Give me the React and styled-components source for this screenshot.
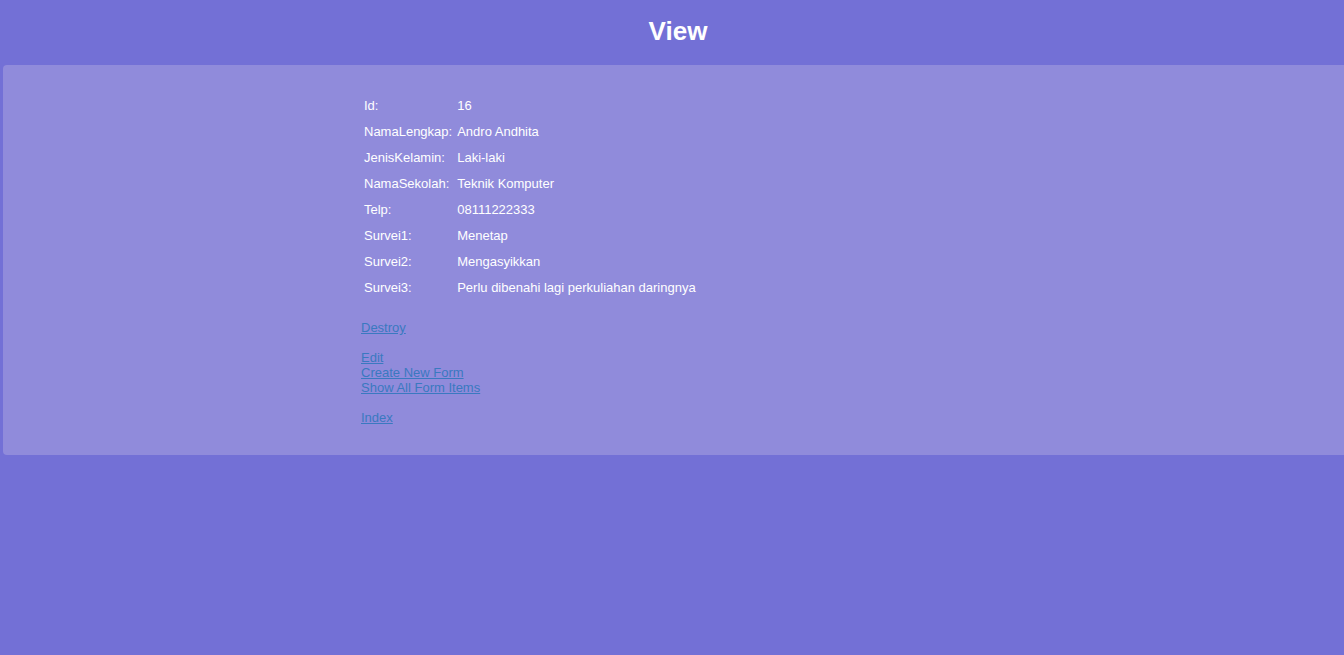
import React from "react";
import styled, { createGlobalStyle } from "styled-components";

const Global = createGlobalStyle`
  html, body { margin: 0; padding: 0; }
  body {
    background: #7370d6;
    font-family: "Liberation Sans", Arial, sans-serif;
    font-size: 13px;
    color: #ffffff;
    overflow: hidden;
  }
`;

const Header = styled.header`
  height: 65px;
  display: flex;
  align-items: center;
  justify-content: center;
  padding-left: 12px;
  box-sizing: border-box;
  padding-bottom: 2px;
`;

const Title = styled.h1`
  margin: 0;
  font-size: 26px;
  font-weight: bold;
  color: #ffffff;
`;

const Panel = styled.main`
  margin-left: 3px;
  width: 1360px;
  height: 390px;
  box-sizing: border-box;
  background: #908bdb;
  border-radius: 4px;
  padding: 28px 0 0 358px;
`;

const Table = styled.table`
  border-collapse: collapse;
  border-spacing: 0;
  margin-bottom: 19px;
`;

const Cell = styled.td`
  padding: 5px 2px 5px 3px;
  line-height: 16px;
  vertical-align: top;
  white-space: nowrap;
  color: #ffffff;
`;

const LinkGroup = styled.div`
  display: flex;
  flex-direction: column;
  align-items: flex-start;
  margin-bottom: 15px;
`;

const Link = styled.a`
  color: #3a79c0;
  text-decoration: underline;
  line-height: 15px;
  font-size: 13px;
`;

const rows = [
  ["Id:", "16"],
  ["NamaLengkap:", "Andro Andhita"],
  ["JenisKelamin:", "Laki-laki"],
  ["NamaSekolah:", "Teknik Komputer"],
  ["Telp:", "08111222333"],
  ["Survei1:", "Menetap"],
  ["Survei2:", "Mengasyikkan"],
  ["Survei3:", "Perlu dibenahi lagi perkuliahan daringnya"],
];

export default function App() {
  return (
    <>
      <Global />
      <Header>
        <Title>View</Title>
      </Header>
      <Panel>
        <Table>
          <tbody>
            {rows.map(([k, v]) => (
              <tr key={k}>
                <Cell>{k}</Cell>
                <Cell>{v}</Cell>
              </tr>
            ))}
          </tbody>
        </Table>
        <LinkGroup>
          <Link href="#">Destroy</Link>
        </LinkGroup>
        <LinkGroup>
          <Link href="#">Edit</Link>
          <Link href="#">Create New Form</Link>
          <Link href="#">Show All Form Items</Link>
        </LinkGroup>
        <LinkGroup>
          <Link href="#">Index</Link>
        </LinkGroup>
      </Panel>
    </>
  );
}
